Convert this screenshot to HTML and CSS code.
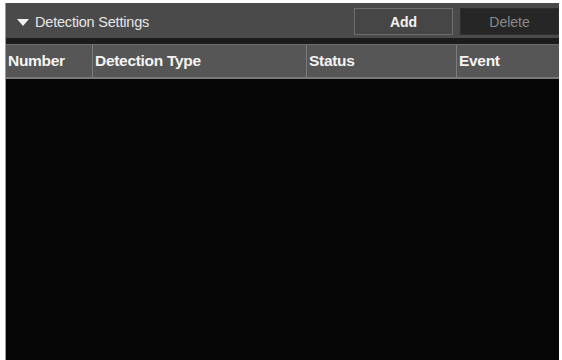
FILE: index.html
```html
<!DOCTYPE html>
<html>
<head>
<meta charset="utf-8">
<link rel="stylesheet" href="styles.css">
</head>
<body>
<div class="panel">
  <div class="titlebar">
    <div class="title"><span class="tri"></span>Detection Settings</div>
    <div class="actions">
      <button class="btn add">Add</button>
      <button class="btn del">Delete</button>
    </div>
  </div>
  <div class="sep"></div>
  <div class="thead">
    <div class="th c1">Number</div>
    <div class="th c2">Detection Type</div>
    <div class="th c3">Status</div>
    <div class="th c4">Event</div>
  </div>
  <div class="tbody"></div>
</div>
</body>
</html>
```
FILE: styles.css
```css
html, body {
  margin: 0;
  padding: 0;
  background: #ffffff;
  height: 100%;
}
body {
  padding: 3px 3px 0 5px;
  box-sizing: border-box;
  font-family: "Liberation Sans", Arial, sans-serif;
}
.panel {
  height: 100%;
  display: flex;
  flex-direction: column;
  background: #050505;
  border-left: 1px solid #9a9a9a;
}
.titlebar {
  height: 35px;
  background: #4a4a4a;
  display: flex;
  align-items: center;
  justify-content: space-between;
}
.title {
  color: #e6e6e6;
  font-size: 14.5px;
  display: flex;
  align-items: center;
  padding-left: 11px;
  padding-top: 3px;
  letter-spacing: -0.2px;
}
.tri {
  width: 0;
  height: 0;
  border-left: 6px solid transparent;
  border-right: 6px solid transparent;
  border-top: 7px solid #f0f0f0;
  margin-right: 6px;
}
.actions {
  display: flex;
  gap: 7px;
  align-self: stretch;
  padding: 5px 0 3px;
}
.btn {
  width: 99px;
  font-family: "Liberation Sans", Arial, sans-serif;
  font-size: 14px;
  padding: 0;
}
.add {
  background: #464646;
  border: 1px solid #6e6e6e;
  color: #f2f2f2;
  font-weight: bold;
}
.del {
  background: #262626;
  border: 1px solid #2e2e2e;
  color: #8a8a8a;
}
.sep {
  height: 6px;
  background: #1c1c1c;
}
.thead {
  height: 32px;
  display: grid;
  grid-template-columns: 87px 214px 150px 1fr;
  background: #565656;
  border-top: 1px solid #6c6c6c;
  border-bottom: 2px solid #7a7a7a;
}
.th {
  color: #f4f4f4;
  font-weight: bold;
  font-size: 15.5px;
  letter-spacing: -0.3px;
  display: flex;
  align-items: center;
  padding-left: 2px;
  border-right: 1px solid #7c7c7c;
}
.th.c4 { border-right: none; }
.tbody {
  flex: 1;
  background: #050505;
}
```
